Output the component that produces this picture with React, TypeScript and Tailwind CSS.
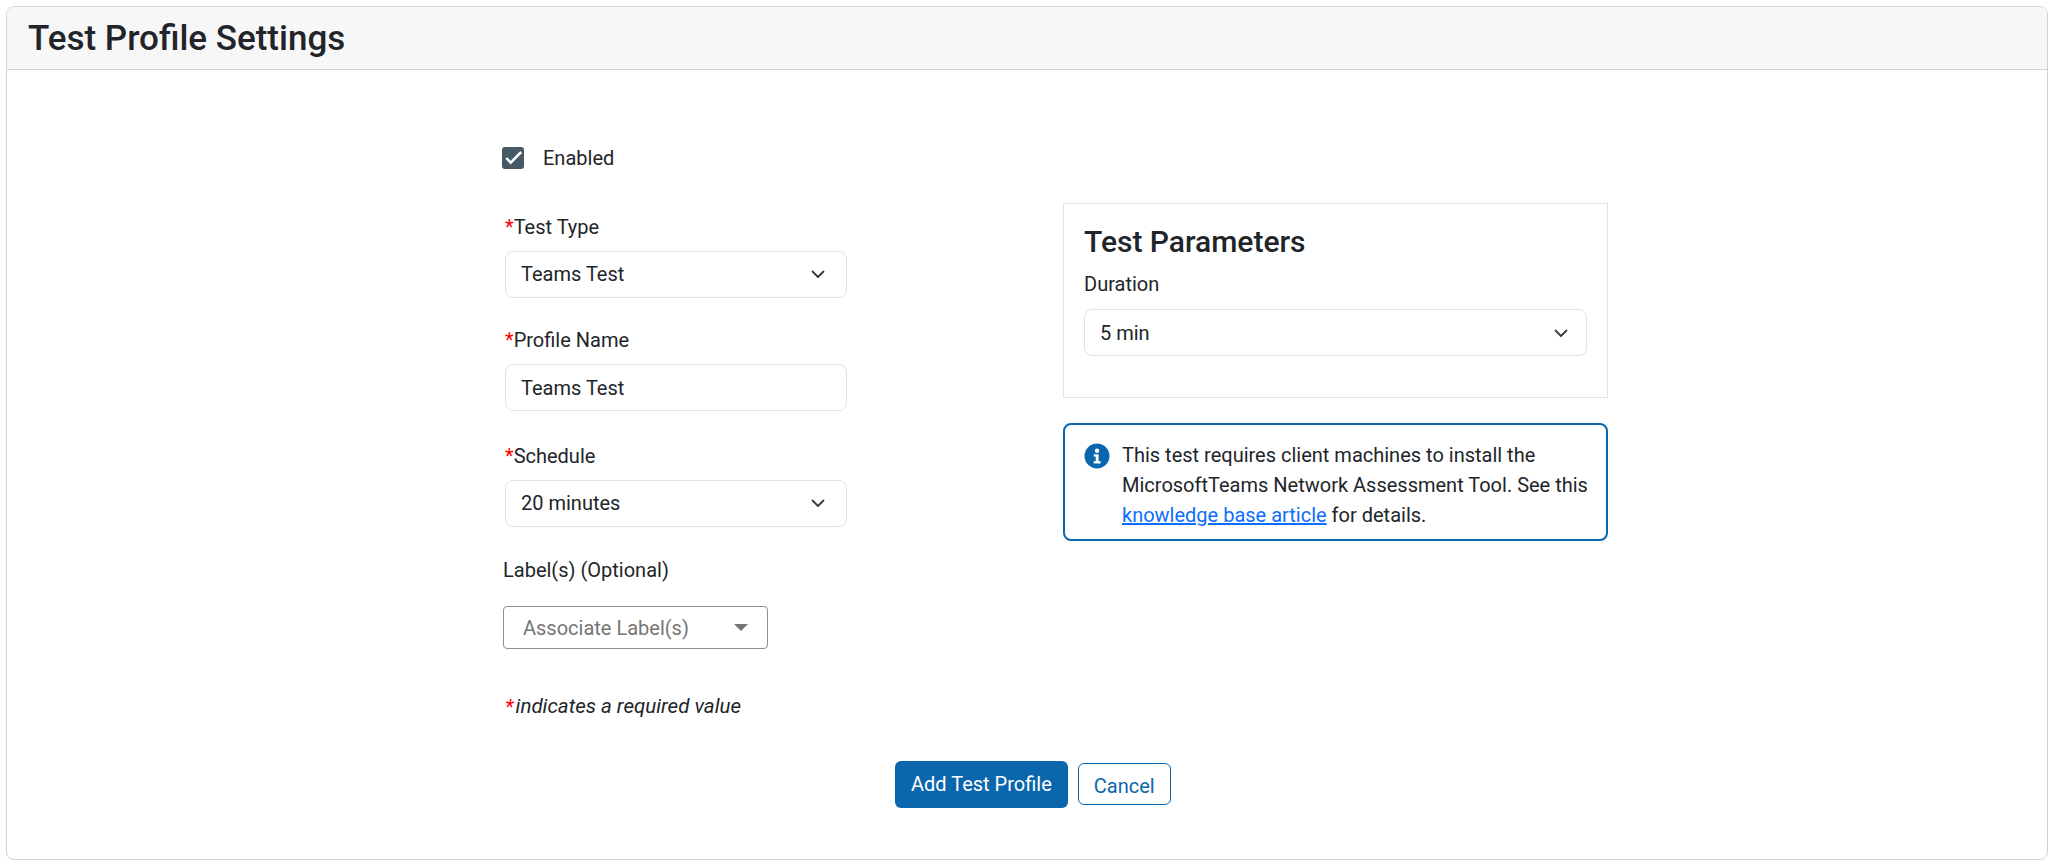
import React from "react";

const Chevron = () => (
  <svg width="16" height="16" viewBox="0 0 16 16" fill="none" className="shrink-0">
    <path d="M2.5 5.5 8 11l5.5-5.5" stroke="#343a40" strokeWidth="1.8" strokeLinecap="round" strokeLinejoin="round" />
  </svg>
);

const Req = ({ children }: { children: React.ReactNode }) => (
  <label className="block h-[30px] leading-[30px]">
    <span className="text-[#ff0000]">*</span>
    {children}
  </label>
);

const SelectBox = ({ value, pad }: { value: string; pad: string }) => (
  <div className={`flex h-[47px] items-center justify-between rounded-[8px] border border-[#dee2e6] bg-white pl-[15px] ${pad}`}>
    <span>{value}</span>
    <Chevron />
  </div>
);

export default function App() {
  return (
    <div className="h-[866px] bg-white p-[6px] text-[20px] text-[#212529] font-['Roboto',sans-serif]">
      <div className="h-[854px] rounded-[8px] border border-[#d3d3d3] overflow-hidden">
        <div className="flex h-[63px] items-center border-b border-[#d3d3d3] bg-[#f7f7f7] pl-[21px] pt-[2px]">
          <h1 className="text-[35px] font-medium leading-[42px]">Test Profile Settings</h1>
        </div>
        <div className="pl-[495px] pt-[76px]">
          <div className="flex h-[24px] items-center">
            <div className="flex h-[22px] w-[22px] items-center justify-center rounded-[3px] bg-[#455a64]">
              <svg width="22" height="22" viewBox="0 0 22 22" fill="none">
                <path d="M4.2 11 8.7 15.6 19.2 5" stroke="white" strokeWidth="2.5" />
              </svg>
            </div>
            <span className="ml-[19px]">Enabled</span>
          </div>
          <div className="mt-[42px] flex items-start">
            <div className="w-[561px]">
              <div className="w-[342px] ml-[3px]">
                <Req>Test Type</Req>
                <div className="mt-[9px]"><SelectBox value="Teams Test" pad="pr-[20px] pb-[1px]" /></div>
                <div className="mt-[27px]"><Req>Profile Name</Req></div>
                <div className="mt-[9px] flex h-[47px] items-center rounded-[8px] border border-[#dee2e6] bg-white pl-[15px] pt-[1px]">Teams Test</div>
                <div className="mt-[30px]"><Req>Schedule</Req></div>
                <div className="mt-[9px]"><SelectBox value="20 minutes" pad="pr-[20px] pb-[1px]" /></div>
              </div>
              <div className="ml-[1px] mt-[28px] h-[30px] leading-[30px]">Label(s) (Optional)</div>
              <div className="ml-[1px] mt-[21px] flex h-[43px] w-[265px] items-center justify-between rounded-[4px] border border-[#8f8f8f] pl-[19px] pr-[19px] text-[#757575]">
                <span>Associate Label(s)</span>
                <span className="h-0 w-0 border-x-[7px] border-t-[7px] border-x-transparent border-t-[#757575]" />
              </div>
              <div className="mt-[42px] ml-[3px] h-[30px] text-[20.5px] italic leading-[30px]">
                <span className="mr-[2px] text-[#ff0000]">*</span>indicates a required value
              </div>
            </div>
            <div className="w-[545px] -mt-[9px]">
              <div className="h-[195px] border border-[#dee2e6] px-[20px] pt-[20px]">
                <h2 className="text-[30px] font-medium leading-[36px]">Test Parameters</h2>
                <div className="mt-[9px] h-[30px] leading-[30px]">Duration</div>
                <div className="mt-[10px]"><SelectBox value="5 min" pad="pr-[17px]" /></div>
              </div>
              <div className="mt-[25px] flex h-[118px] rounded-[8px] border-2 border-[#0a66ad] pl-[19px] pt-[15px]">
                <svg width="26" height="26" viewBox="0 0 26 26" className="mt-[3px] shrink-0">
                  <circle cx="13" cy="13" r="12.5" fill="#0a66ad" />
                  <circle cx="13" cy="7.8" r="2.2" fill="white" />
                  <path d="M9.7 11.2h4.9v7h2v2.4H9.7v-2.4h2v-4.6h-2z" fill="white" />
                </svg>
                <p className="ml-[12px] leading-[30px] whitespace-nowrap">
                  This test requires client machines to install the
                  <br />
                  MicrosoftTeams Network Assessment Tool. See this
                  <br />
                  <a className="text-[#0d6efd] underline">knowledge base article</a> for details.
                </p>
              </div>
            </div>
          </div>
          <div className="mt-[40px] ml-[393px] flex items-start">
            <button className="h-[47px] rounded-[6px] bg-[#0a66ad] px-[16px] pb-[1px] text-white">Add Test Profile</button>
            <button className="ml-[10px] mt-[2px] h-[42px] rounded-[6px] border border-[#0a66ad] px-[15px] pt-[3px] text-[#0a66ad]">Cancel</button>
          </div>
        </div>
      </div>
    </div>
  );
}
